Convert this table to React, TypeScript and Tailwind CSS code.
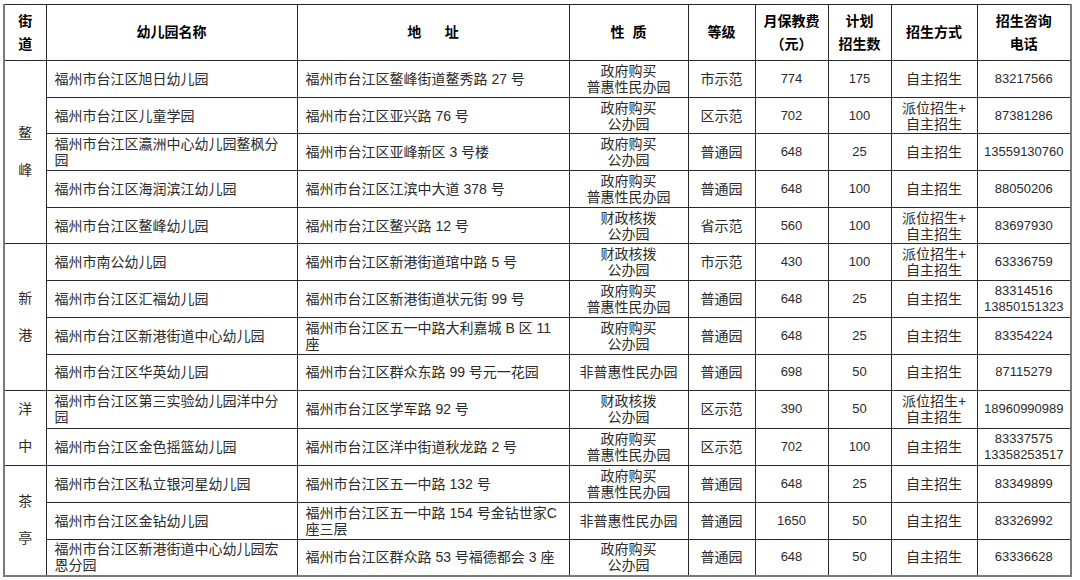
import React from 'react';

type Row = {
  name: React.ReactNode;
  address: React.ReactNode;
  nature: React.ReactNode;
  level: string;
  fee: string;
  plan: string;
  method: React.ReactNode;
  phone: React.ReactNode;
};

type Group = {
  street: React.ReactNode;
  rows: Row[];
};

const GOV_PRIVATE = (
  <>
    政府购买
    <br />
    普惠性民办园
  </>
);
const GOV_PUBLIC = (
  <>
    政府购买
    <br />
    公办园
  </>
);
const FIN_PUBLIC = (
  <>
    财政核拨
    <br />
    公办园
  </>
);
const DISPATCH = (
  <>
    派位招生+
    <br />
    自主招生
  </>
);

const groups: Group[] = [
  {
    street: (
      <>
        鳌<br />峰
      </>
    ),
    rows: [
      { name: '福州市台江区旭日幼儿园', address: '福州市台江区鳌峰街道鳌秀路 27 号', nature: GOV_PRIVATE, level: '市示范', fee: '774', plan: '175', method: '自主招生', phone: '83217566' },
      { name: '福州市台江区儿童学园', address: '福州市台江区亚兴路 76 号', nature: GOV_PUBLIC, level: '区示范', fee: '702', plan: '100', method: DISPATCH, phone: '87381286' },
      {
        name: (
          <>
            福州市台江区瀛洲中心幼儿园鳌枫分
            <br />园
          </>
        ),
        address: '福州市台江区亚峰新区 3 号楼',
        nature: GOV_PUBLIC,
        level: '普通园',
        fee: '648',
        plan: '25',
        method: '自主招生',
        phone: '13559130760',
      },
      { name: '福州市台江区海润滨江幼儿园', address: '福州市台江区江滨中大道 378 号', nature: GOV_PRIVATE, level: '普通园', fee: '648', plan: '100', method: '自主招生', phone: '88050206' },
      { name: '福州市台江区鳌峰幼儿园', address: '福州市台江区鳌兴路 12 号', nature: FIN_PUBLIC, level: '省示范', fee: '560', plan: '100', method: DISPATCH, phone: '83697930' },
    ],
  },
  {
    street: (
      <>
        新<br />港
      </>
    ),
    rows: [
      { name: '福州市南公幼儿园', address: '福州市台江区新港街道琯中路 5 号', nature: FIN_PUBLIC, level: '市示范', fee: '430', plan: '100', method: DISPATCH, phone: '63336759' },
      {
        name: '福州市台江区汇福幼儿园',
        address: '福州市台江区新港街道状元街 99 号',
        nature: GOV_PRIVATE,
        level: '普通园',
        fee: '648',
        plan: '25',
        method: '自主招生',
        phone: (
          <>
            83314516
            <br />
            13850151323
          </>
        ),
      },
      {
        name: '福州市台江区新港街道中心幼儿园',
        address: (
          <>
            福州市台江区五一中路大利嘉城 B 区 11
            <br />座
          </>
        ),
        nature: GOV_PUBLIC,
        level: '普通园',
        fee: '648',
        plan: '25',
        method: '自主招生',
        phone: '83354224',
      },
      { name: '福州市台江区华英幼儿园', address: '福州市台江区群众东路 99 号元一花园', nature: '非普惠性民办园', level: '普通园', fee: '698', plan: '50', method: '自主招生', phone: '87115279' },
    ],
  },
  {
    street: (
      <>
        洋<br />中
      </>
    ),
    rows: [
      {
        name: (
          <>
            福州市台江区第三实验幼儿园洋中分
            <br />园
          </>
        ),
        address: '福州市台江区学军路 92 号',
        nature: FIN_PUBLIC,
        level: '区示范',
        fee: '390',
        plan: '50',
        method: DISPATCH,
        phone: '18960990989',
      },
      {
        name: '福州市台江区金色摇篮幼儿园',
        address: '福州市台江区洋中街道秋龙路 2 号',
        nature: GOV_PRIVATE,
        level: '区示范',
        fee: '702',
        plan: '100',
        method: '自主招生',
        phone: (
          <>
            83337575
            <br />
            13358253517
          </>
        ),
      },
    ],
  },
  {
    street: (
      <>
        茶<br />亭
      </>
    ),
    rows: [
      { name: '福州市台江区私立银河星幼儿园', address: '福州市台江区五一中路 132 号', nature: GOV_PRIVATE, level: '普通园', fee: '648', plan: '25', method: '自主招生', phone: '83349899' },
      {
        name: '福州市台江区金钻幼儿园',
        address: (
          <>
            福州市台江区五一中路 154 号金钻世家C
            <br />
            座三层
          </>
        ),
        nature: '非普惠性民办园',
        level: '普通园',
        fee: '1650',
        plan: '50',
        method: '自主招生',
        phone: '83326992',
      },
      {
        name: (
          <>
            福州市台江区新港街道中心幼儿园宏
            <br />
            恩分园
          </>
        ),
        address: '福州市台江区群众路 53 号福德都会 3 座',
        nature: GOV_PUBLIC,
        level: '普通园',
        fee: '648',
        plan: '50',
        method: '自主招生',
        phone: '63336628',
      },
    ],
  },
];

const cell = 'border border-[#2a2a2a] h-[36.7px] p-0 align-middle';
const center = `${cell} text-center leading-[16px]`;
const num = `${center} text-[13px]`;
const left = `${cell} text-left pl-[8px] leading-[16px]`;
const head = 'border border-[#2a2a2a] p-0 text-center align-middle font-bold text-black leading-[23px]';

export default function App() {
  return (
    <div
      className="h-[580px] w-[1080px] bg-white pl-[3px] pt-[4px] text-[14px] text-[#2b2b2b]"
      style={{ fontFamily: '"Liberation Sans", "Noto Sans CJK SC", sans-serif' }}
    >
      <table className="w-[1067px] table-fixed border-collapse border-x-2 border-b-2 border-x-[#7a7a7a] border-b-[#7a7a7a]">
        <colgroup>
          <col className="w-[42px]" />
          <col className="w-[251px]" />
          <col className="w-[272px]" />
          <col className="w-[119px]" />
          <col className="w-[67px]" />
          <col className="w-[73px]" />
          <col className="w-[63px]" />
          <col className="w-[86px]" />
          <col className="w-[94px]" />
        </colgroup>
        <thead>
          <tr className="h-[56px]">
            <th className={`${head} border-l-2 border-l-[#7a7a7a]`}>
              街<br />道
            </th>
            <th className={head}>幼儿园名称</th>
            <th className={`${head} whitespace-pre`}>地      址</th>
            <th className={`${head} whitespace-pre`}>性  质</th>
            <th className={head}>等级</th>
            <th className={head}>
              月保教费
              <br />
              （元）
            </th>
            <th className={head}>
              计划
              <br />
              招生数
            </th>
            <th className={head}>招生方式</th>
            <th className={`${head} border-r-2 border-r-[#7a7a7a]`}>
              招生咨询
              <br />
              电话
            </th>
          </tr>
        </thead>
        <tbody>
          {groups.map((group, gi) =>
            group.rows.map((row, ri) => (
              <tr key={`${gi}-${ri}`}>
                {ri === 0 && (
                  <td
                    rowSpan={group.rows.length}
                    className="border border-[#2a2a2a] border-l-2 border-l-[#7a7a7a] p-0 text-center align-middle leading-[37px]"
                  >
                    {group.street}
                  </td>
                )}
                <td className={`${left} whitespace-nowrap`}>{row.name}</td>
                <td className={`${left} whitespace-nowrap`}>{row.address}</td>
                <td className={`${center} whitespace-nowrap`}>{row.nature}</td>
                <td className={center}>{row.level}</td>
                <td className={num}>{row.fee}</td>
                <td className={num}>{row.plan}</td>
                <td className={`${center} whitespace-nowrap`}>{row.method}</td>
                <td className={`${num} border-r-2 border-r-[#7a7a7a]`}>{row.phone}</td>
              </tr>
            ))
          )}
        </tbody>
      </table>
    </div>
  );
}
